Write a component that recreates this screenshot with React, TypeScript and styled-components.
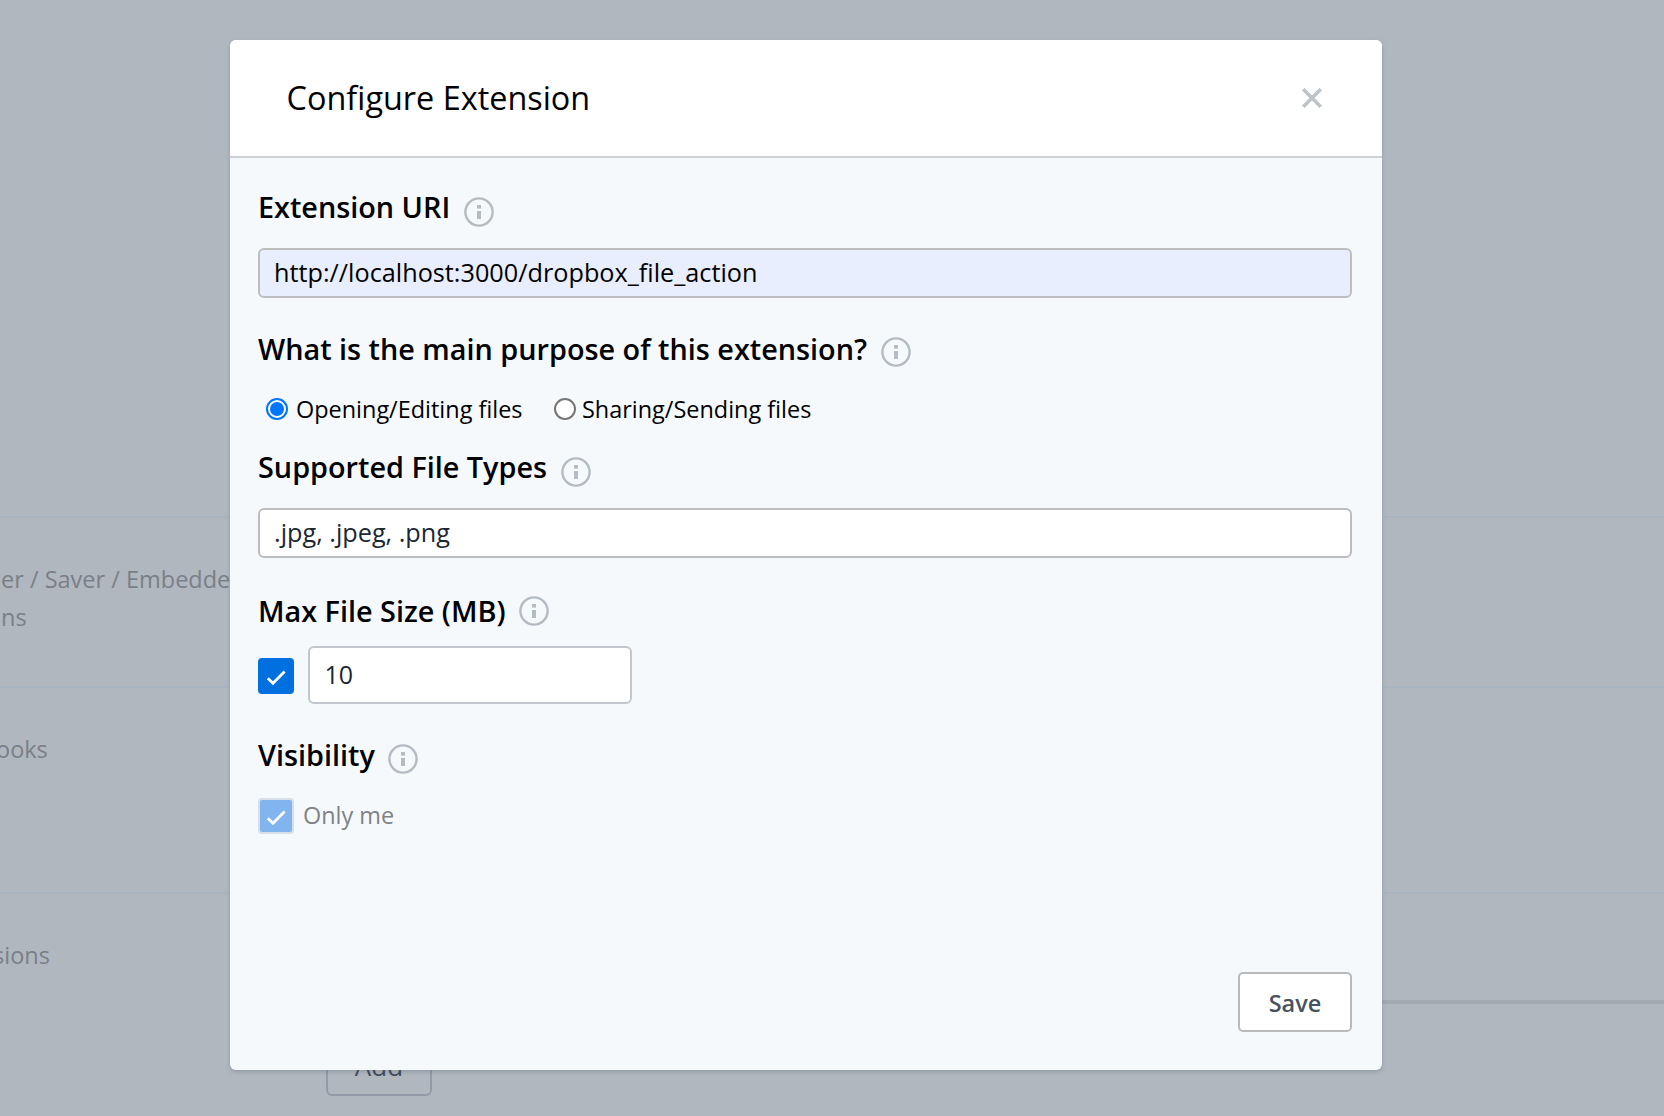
import React from "react";
import styled, { createGlobalStyle } from "styled-components";

const Global = createGlobalStyle`
  * { box-sizing: border-box; }
  body {
    margin: 0;
    overflow: hidden;
    background: #b0b7bf;
    font-family: "Open Sans", "Noto Sans", sans-serif;
    color: #000;
  }
  input, button { font-family: inherit; margin: 0; }
`;

const Page = styled.main`
  position: relative;
  width: 1664px;
  height: 1116px;
  overflow: hidden;
`;

const Backdrop = styled.div`
  display: flex;
  flex-direction: column;
  height: 100%;
  padding-top: 516px;
`;

const Section = styled.section<{ $height: number }>`
  display: flex;
  height: ${(p) => p.$height}px;
  border-top: 2px solid #a9b4c1;
`;

const SectionLabel = styled.div<{ $top: number; $shift: number }>`
  width: 326px;
  flex: none;
  padding-top: ${(p) => p.$top}px;
  margin-left: ${(p) => p.$shift}px;
  margin-right: ${(p) => -p.$shift}px;
  font-size: 23.5px;
  line-height: 38px;
  color: #7a8087;
  white-space: nowrap;
`;

const SectionContent = styled.div`
  flex: 1;
  display: flex;
  flex-direction: column;
  align-items: flex-start;
  padding-top: 106px;
`;

const Rule = styled.hr`
  width: 100%;
  height: 4px;
  margin: 0 0 34px;
  border: 0;
  background: #a2a9b1;
`;

const AddButton = styled.button`
  width: 106px;
  height: 58px;
  padding: 0 0 2px;
  border: 2px solid #929ba7;
  border-radius: 6px;
  background: transparent;
  font-size: 26px;
  font-weight: 500;
  color: #424d5d;
`;

const Overlay = styled.div`
  position: absolute;
  inset: 0;
  display: flex;
  align-items: flex-start;
  padding: 40px 0 0 230px;
`;

const Dialog = styled.div`
  display: flex;
  flex-direction: column;
  width: 1152px;
  height: 1030px;
  border-radius: 6px;
  background: #f5f9fc;
  box-shadow: 0 2px 4px rgba(60, 75, 90, 0.25);
  overflow: hidden;
`;

const Header = styled.header`
  display: flex;
  align-items: center;
  justify-content: space-between;
  height: 118px;
  padding: 0 60px 0 56.6px;
  border-bottom: 2px solid #cdd1d6;
  background: #fff;
`;

const Title = styled.h1`
  margin: 0;
  padding-bottom: 2px;
  font-size: 32.4px;
  font-weight: 400;
  line-height: 44px;
`;

const CloseButton = styled.button`
  display: flex;
  padding: 0;
  border: 0;
  background: none;
  color: #bcc3c9;
`;

const Body = styled.form`
  flex: 1;
  display: flex;
  flex-direction: column;
  padding: 30px 30px 38px 28px;
`;

const Field = styled.div<{ $height: number }>`
  display: flex;
  flex-direction: column;
  height: ${(p) => p.$height}px;
`;

const Heading = styled.div<{ $gap: number }>`
  display: flex;
  align-items: flex-start;
  gap: 13.5px;
  height: 38px;
  margin-bottom: ${(p) => p.$gap}px;
`;

const HeadingText = styled.h2`
  margin: 0;
  font-size: 28.8px;
  font-weight: 600;
  line-height: 38px;
  white-space: nowrap;
`;

const InfoWrap = styled.span<{ $top: number }>`
  display: flex;
  margin-top: ${(p) => p.$top}px;
`;

const TextInput = styled.input<{ $filled?: boolean }>`
  width: 100%;
  height: 50px;
  padding: 0 14px 2px;
  border: 2px solid #bdbdbf;
  border-radius: 6px;
  background: ${(p) => (p.$filled ? "#e8eefe" : "#fff")};
  color: ${(p) => (p.$filled ? "#000" : "#1b2733")};
  font-size: 25.25px;
  outline: none;
`;

const SizeInput = styled.input`
  width: 324px;
  height: 58px;
  padding: 0 14.5px 2px;
  border: 2px solid #c1c7cd;
  border-radius: 6px;
  background: #fff;
  color: #1b2733;
  font-size: 25px;
  outline: none;
`;

const RadioRow = styled.div`
  display: flex;
  height: 34px;
  padding-left: 8px;
`;

const RadioLabel = styled.label<{ $width: number; $gap: number }>`
  display: flex;
  align-items: flex-start;
  gap: ${(p) => p.$gap}px;
  width: ${(p) => p.$width}px;
  font-size: 23.45px;
  line-height: 34px;
  white-space: nowrap;
`;

const Radio = styled.input`
  appearance: none;
  flex: none;
  display: grid;
  place-items: center;
  width: 22px;
  height: 22px;
  margin-top: 6px;
  border: 2px solid #767676;
  border-radius: 50%;
  background: #fff;
  &:checked { border-color: #0075ff; }
  &:checked::before {
    content: "";
    width: 14px;
    height: 14px;
    border-radius: 50%;
    background: #0075ff;
  }
`;

const CheckRow = styled.div<{ $gap: number }>`
  display: flex;
  align-items: center;
  gap: ${(p) => p.$gap}px;
`;

const CheckBox = styled.span<{ $disabled?: boolean; $drop?: number }>`
  display: grid;
  place-items: center;
  width: 36px;
  height: 36px;
  margin-top: ${(p) => p.$drop ?? 0}px;
  border: 2px solid ${(p) => (p.$disabled ? "#d9dfe7" : "#0070e0")};
  border-radius: 4px;
  background: ${(p) => (p.$disabled ? "#82b4f0" : "#0070e0")};
`;

const CheckText = styled.span`
  padding-bottom: 2px;
  font-size: 23.45px;
  line-height: 34px;
  color: #808285;
`;

const Footer = styled.footer`
  display: flex;
  justify-content: flex-end;
  margin-top: auto;
`;

const SaveButton = styled.button`
  width: 114px;
  height: 60px;
  padding: 2px 0 0;
  border: 2px solid #b9babb;
  border-radius: 5px;
  background: #fff;
  color: #47525f;
  font-size: 23.5px;
  font-weight: 600;
`;

function Info({ top }: { top: number }) {
  return (
    <InfoWrap $top={top}>
      <svg width="30" height="30" viewBox="0 0 30 30" fill="#b4bbc3">
        <circle cx="15" cy="15" r="13.6" fill="none" stroke="#b4bbc3" strokeWidth="2.4" />
        <rect x="13" y="8" width="4" height="3.6" />
        <rect x="13" y="14" width="4" height="8" />
      </svg>
    </InfoWrap>
  );
}

function Tick() {
  return (
    <svg width="24" height="24" viewBox="0 0 24 24" fill="none" stroke="#fff" strokeWidth="2.8">
      <path d="M3.8 14.2 L9 19.2 L20.6 7.6" />
    </svg>
  );
}

export default function App() {
  return (
    <Page>
      <Global />
      <Backdrop>
        <Section $height={170}>
          <SectionLabel $top={42} $shift={1}>er / Saver / Embedded<br />ns</SectionLabel>
        </Section>
        <Section $height={206}>
          <SectionLabel $top={42} $shift={-4}>ooks</SectionLabel>
        </Section>
        <Section $height={224}>
          <SectionLabel $top={42} $shift={-7}>sions</SectionLabel>
          <SectionContent>
            <Rule />
            <AddButton>Add</AddButton>
          </SectionContent>
        </Section>
      </Backdrop>
      <Overlay>
        <Dialog role="dialog">
          <Header>
            <Title>Configure Extension</Title>
            <CloseButton type="button" aria-label="Close">
              <svg width="20" height="20" viewBox="0 0 20 20" fill="none" stroke="currentColor" strokeWidth="3.6">
                <path d="M1.2 1.2 L18.8 18.8 M18.8 1.2 L1.2 18.8" />
              </svg>
            </CloseButton>
          </Header>
          <Body>
            <Field $height={142}>
              <Heading $gap={22}>
                <HeadingText>Extension URI</HeadingText>
                <Info top={9} />
              </Heading>
              <TextInput $filled defaultValue="http://localhost:3000/dropbox_file_action" />
            </Field>
            <Field $height={118}>
              <Heading $gap={24}>
                <HeadingText>What is the main purpose of this extension?</HeadingText>
                <Info top={7} />
              </Heading>
              <RadioRow>
                <RadioLabel $width={288} $gap={8}>
                  <Radio type="radio" name="purpose" defaultChecked />
                  Opening/Editing files
                </RadioLabel>
                <RadioLabel $width={288} $gap={6}>
                  <Radio type="radio" name="purpose" />
                  Sharing/Sending files
                </RadioLabel>
              </RadioRow>
            </Field>
            <Field $height={144}>
              <Heading $gap={22}>
                <HeadingText>Supported File Types</HeadingText>
                <Info top={9} />
              </Heading>
              <TextInput defaultValue=".jpg, .jpeg, .png" />
            </Field>
            <Field $height={144}>
              <Heading $gap={16}>
                <HeadingText>Max File Size (MB)</HeadingText>
                <Info top={4} />
              </Heading>
              <CheckRow $gap={14}>
                <CheckBox $drop={2}><Tick /></CheckBox>
                <SizeInput defaultValue="10" />
              </CheckRow>
            </Field>
            <Field $height={100}>
              <Heading $gap={24}>
                <HeadingText>Visibility</HeadingText>
                <Info top={8} />
              </Heading>
              <CheckRow $gap={9}>
                <CheckBox $disabled><Tick /></CheckBox>
                <CheckText>Only me</CheckText>
              </CheckRow>
            </Field>
            <Footer>
              <SaveButton type="button">Save</SaveButton>
            </Footer>
          </Body>
        </Dialog>
      </Overlay>
    </Page>
  );
}
